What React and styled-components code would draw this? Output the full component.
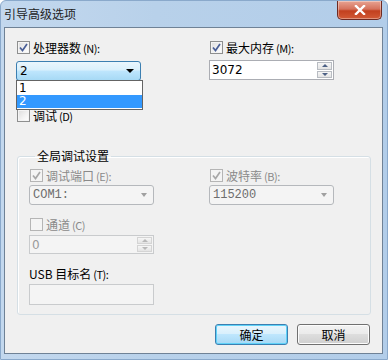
import React from "react";
import styled, { createGlobalStyle } from "styled-components";

const Global = createGlobalStyle`
  html, body { margin: 0; padding: 0; background: #ffffff; }
  body {
    font-family: "Noto Sans CJK SC", "DejaVu Sans", sans-serif;
    font-size: 12px;
    color: #000;
  }
`;

const Window = styled.div`
  width: 388px;
  height: 360px;
  box-sizing: border-box;
  display: flex;
  flex-direction: column;
  background: linear-gradient(90deg, #c3d8ee 0%, #b8d1ea 40%, #b2cde9 100%);
  border: 1px solid #8aa9cb;
  border-radius: 6px 6px 0 0;
  overflow: hidden;
`;

const TitleBar = styled.div`
  height: 26px;
  display: flex;
  align-items: flex-start;
  justify-content: space-between;
  padding-left: 3px;
`;

const Title = styled.span`
  margin-top: 6px;
  font-size: 12px;
  line-height: 14px;
  color: #1e1e1e;
`;

const CloseButton = styled.div`
  width: 45px;
  height: 19px;
  margin-right: 5px;
  box-sizing: border-box;
  border: 1px solid #6e2a22;
  border-top: none;
  border-radius: 0 0 5px 5px;
  background: linear-gradient(180deg, #e8a493 0%, #d5725c 45%, #c2401f 55%, #d25a36 100%);
  display: flex;
  align-items: center;
  justify-content: center;
  box-shadow: inset 0 0 0 1px rgba(255, 255, 255, 0.35);
`;

const Client = styled.div`
  flex: 1;
  margin: 0 4px 5px 3px;
  border: 1px solid #6f8296;
  background: #f0f0f0;
  display: flex;
  flex-direction: column;
  padding: 13px 0 0 11px;
`;

const TopGrid = styled.div`
  display: grid;
  grid-template-columns: 193px 1fr;
`;

const Column = styled.div`
  display: flex;
  flex-direction: column;
  align-items: flex-start;
`;

const CheckRow = styled.label`
  display: flex;
  align-items: center;
  gap: 3px;
  height: 13px;
  margin-left: 1px;
  margin-top: ${(p) => p.$top || 0}px;
  color: ${(p) => (p.$disabled ? "#8a8a8a" : "#000")};
  line-height: 13px;
  white-space: nowrap;
`;

const Mn = styled.span`
  font-size: 11px;
  letter-spacing: -0.5px;
  margin-left: 2px;
`;

const Box = styled.span`
  width: 13px;
  height: 13px;
  box-sizing: border-box;
  border: 1px solid ${(p) => (p.$disabled ? "#b5b5b5" : "#8e8f8f")};
  background: ${(p) =>
    p.$disabled
      ? "#f4f4f4"
      : "linear-gradient(135deg, #dcdcdc 0%, #f4f4f4 60%, #ffffff 100%)"};
  box-shadow: inset 0 0 0 1px #f4f4f4;
  display: flex;
  align-items: center;
  justify-content: center;
  flex: none;
`;

const Combo = styled.div`
  position: relative;
  width: ${(p) => p.$w || 125}px;
  height: 20px;
  box-sizing: border-box;
  margin-top: ${(p) => p.$top || 0}px;
  border: 1px solid ${(p) => (p.$active ? "#3c7fb1" : "#b5b8bc")};
  border-radius: 3px;
  background: ${(p) =>
    p.$active
      ? "linear-gradient(180deg, #eaf6fd 0%, #d9f0fc 45%, #bee6fd 50%, #a7d9f5 100%)"
      : "#f4f4f4"};
  display: flex;
  align-items: center;
  justify-content: space-between;
  padding: 0 6px 0 3px;
  color: ${(p) => (p.$active ? "#000" : "#6d6d6d")};
  font-family: ${(p) => (p.$active ? '"DejaVu Sans", sans-serif' : '"Liberation Mono", "DejaVu Sans Mono", monospace')};
  font-size: 12px;
`;

const Arrow = styled.span`
  width: 0;
  height: 0;
  border-left: ${(p) => (p.$active ? 4 : 3.5)}px solid transparent;
  border-right: ${(p) => (p.$active ? 4 : 3.5)}px solid transparent;
  border-top: 4px solid ${(p) => (p.$active ? "#000" : "#a0a0a0")};
`;

const DropList = styled.div`
  position: absolute;
  left: -1px;
  top: 18px;
  width: 127px;
  box-sizing: border-box;
  border: 1px solid #646464;
  background: #fff;
  padding: 1px 0;
  z-index: 2;
  font-family: "DejaVu Sans", sans-serif;
  font-size: 12px;
`;

const DropItem = styled.div`
  height: 13px;
  line-height: 13px;
  padding-left: 2px;
  background: ${(p) => (p.$selected ? "#3399ff" : "transparent")};
  color: ${(p) => (p.$selected ? "#fff" : "#000")};
`;

const Spin = styled.div`
  width: 125px;
  height: ${(p) => p.$h || 20}px;
  box-sizing: border-box;
  margin-top: ${(p) => p.$top || 0}px;
  border: 1px solid ${(p) => (p.$disabled ? "#c9cbcd" : "#abadb3")};
  background: ${(p) => (p.$disabled ? "#f4f4f4" : "#fff")};
  display: flex;
  align-items: stretch;
`;

const SpinText = styled.span`
  flex: 1;
  padding-left: 2px;
  display: flex;
  align-items: center;
  font-family: "DejaVu Sans", sans-serif;
  font-size: 12px;
  color: ${(p) => (p.$disabled ? "#9a9a9a" : "#000")};
`;

const SpinButtons = styled.div`
  width: 15px;
  display: flex;
  flex-direction: column;
  padding: 1px 1px 1px 0;
  gap: 1px;
`;

const SpinBtn = styled.div`
  flex: 1;
  border: 1px solid ${(p) => (p.$disabled ? "#d4d4d4" : "#b8bcc2")};
  background: linear-gradient(180deg, #f6f6f6, #e4e4e4);
  display: flex;
  align-items: center;
  justify-content: center;
`;

const Tri = styled.span`
  width: 0;
  height: 0;
  border-left: 3px solid transparent;
  border-right: 3px solid transparent;
  ${(p) => (p.$up ? "border-bottom" : "border-top")}: 3px solid ${(p) =>
    p.$disabled ? "#b8b8b8" : "#4d6185"};
`;

const Group = styled.fieldset`
  margin: 26px 11px 0 1px;
  padding: 5px 0 9px 11px;
  border: 1px solid #d5dfe5;
  border-radius: 3px;
  box-shadow: inset 1px 1px 0 #fff;
  min-width: 0;
`;

const Legend = styled.legend`
  padding: 0 2px;
  margin-left: 6px;
  font-size: 12px;
  line-height: 16px;
`;

const GroupGrid = styled.div`
  display: grid;
  grid-template-columns: 180px 1fr;
`;

const Label = styled.div`
  margin-top: ${(p) => p.$top || 0}px;
  height: 14px;
  line-height: 14px;
  white-space: nowrap;
`;

const TextBox = styled.div`
  width: 125px;
  height: 21px;
  box-sizing: border-box;
  margin-top: ${(p) => p.$top || 0}px;
  border: 1px solid #c9cbcd;
  background: #f4f4f4;
`;

const ButtonRow = styled.div`
  display: flex;
  justify-content: flex-end;
  gap: 9px;
  margin: 9px 12px 0 0;
`;

const Button = styled.div`
  width: 73px;
  height: 21px;
  box-sizing: border-box;
  border: 1px solid ${(p) => (p.$primary ? "#3c7fb1" : "#707070")};
  border-radius: 3px;
  background: ${(p) =>
    p.$primary
      ? "linear-gradient(180deg, #eaf6fd 0%, #d9f0fc 45%, #bee6fd 50%, #a7d9f5 100%)"
      : "linear-gradient(180deg, #f2f2f2 0%, #ebebeb 45%, #dddddd 50%, #cfcfcf 100%)"};
  box-shadow: inset 0 0 0 1px ${(p) => (p.$primary ? "#5fd2f8" : "#fcfcfc")};
  display: flex;
  align-items: center;
  justify-content: center;
  font-size: 12px;
`;

const Check = ({ disabled }) => (
  <svg width="9" height="9" viewBox="0 0 9 9">
    <path
      d="M1 4.5 L3.5 7.5 L8 1"
      fill="none"
      stroke={disabled ? "#a8a8a8" : "#4a5f97"}
      strokeWidth="1.7"
    />
  </svg>
);

const CheckBox = ({ checked, disabled, label, mn, top }) => (
  <CheckRow $disabled={disabled} $top={top}>
    <Box $disabled={disabled}>{checked && <Check disabled={disabled} />}</Box>
    <span>
      {label}
      <Mn>{mn}</Mn>
    </span>
  </CheckRow>
);

const SpinBox = ({ value, disabled, top, h }) => (
  <Spin $disabled={disabled} $top={top} $h={h}>
    <SpinText $disabled={disabled}>{value}</SpinText>
    <SpinButtons>
      <SpinBtn $disabled={disabled}>
        <Tri $up $disabled={disabled} />
      </SpinBtn>
      <SpinBtn $disabled={disabled}>
        <Tri $disabled={disabled} />
      </SpinBtn>
    </SpinButtons>
  </Spin>
);

export default function App() {
  return (
    <>
      <Global />
      <Window>
        <TitleBar>
          <Title>引导高级选项</Title>
          <CloseButton>
            <svg width="12" height="10" viewBox="0 0 12 10">
              <path
                d="M2 1 L10 9 M10 1 L2 9"
                stroke="#fff"
                strokeWidth="2.4"
                strokeLinecap="square"
              />
            </svg>
          </CloseButton>
        </TitleBar>
        <Client>
          <TopGrid>
            <Column>
              <CheckBox checked label="处理器数" mn="(N):" />
              <Combo $active $top={7}>
                <span>2</span>
                <Arrow $active />
                <DropList>
                  <DropItem>1</DropItem>
                  <DropItem $selected>2</DropItem>
                </DropList>
              </Combo>
              <CheckBox label="调试" mn="(D)" top={28} />
            </Column>
            <Column>
              <CheckBox checked label="最大内存" mn="(M):" />
              <SpinBox value="3072" top={6} />
            </Column>
          </TopGrid>
          <Group>
            <Legend>全局调试设置</Legend>
            <GroupGrid>
              <Column>
                <CheckBox checked disabled label="调试端口" mn="(E):" />
                <Combo $top={3}>
                  <span>COM1:</span>
                  <Arrow />
                </Combo>
                <CheckBox disabled label="通道" mn="(C)" top={13} />
                <SpinBox value="0" disabled top={4} h={19} />
                <Label $top={13}>
                  USB 目标名<Mn>(T):</Mn>
                </Label>
                <TextBox $top={3} />
              </Column>
              <Column>
                <CheckBox checked disabled label="波特率" mn="(B):" />
                <Combo $top={3}>
                  <span>115200</span>
                  <Arrow />
                </Combo>
              </Column>
            </GroupGrid>
          </Group>
          <ButtonRow>
            <Button $primary>确定</Button>
            <Button>取消</Button>
          </ButtonRow>
        </Client>
      </Window>
    </>
  );
}
